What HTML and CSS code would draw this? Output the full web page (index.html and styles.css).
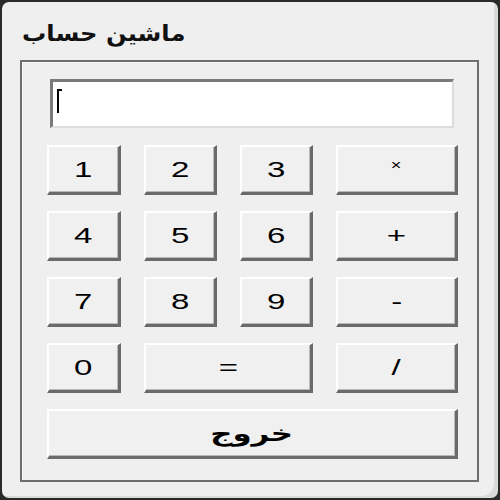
FILE: index.html
```html
<!DOCTYPE html>
<html lang="fa">
<head>
<meta charset="utf-8">
<link rel="stylesheet" href="styles.css">
</head>
<body>
<div class="window">
  <div class="title"><span class="title-text" dir="rtl">ماشین حساب</span></div>
  <div class="frame">
    <div class="display"><span class="caret"></span></div>
    <div class="keys">
      <button class="key"><span class="lbl">1</span></button>
      <button class="key"><span class="lbl">2</span></button>
      <button class="key"><span class="lbl">3</span></button>
      <button class="key"><span class="lbl small">×</span></button>
      <button class="key"><span class="lbl">4</span></button>
      <button class="key"><span class="lbl">5</span></button>
      <button class="key"><span class="lbl">6</span></button>
      <button class="key"><span class="lbl">+</span></button>
      <button class="key"><span class="lbl">7</span></button>
      <button class="key"><span class="lbl">8</span></button>
      <button class="key"><span class="lbl">9</span></button>
      <button class="key"><span class="lbl">-</span></button>
      <button class="key"><span class="lbl">0</span></button>
      <button class="key span2"><span class="lbl">=</span></button>
      <button class="key"><span class="lbl">/</span></button>
      <button class="key span4"><span class="lbl exit" dir="rtl">خروج</span></button>
    </div>
  </div>
</div>
</body>
</html>
```
FILE: styles.css
```css
html, body {
  margin: 0;
  padding: 0;
  background: #2b2b2b;
}
.window {
  box-sizing: border-box;
  width: 500px;
  height: 500px;
  background: #efefef;
  border: 2px solid #2a2a2a;
  border-radius: 9px;
  box-shadow: inset -10px -8px 0 -6px #dadada;
  padding: 18px 0 0 18px;
  font-family: "DejaVu Sans", "Liberation Sans", sans-serif;
}
.title {
  height: 40px;
  line-height: 28px;
}
.title-text {
  display: inline-block;
  font-size: 22px;
  font-weight: bold;
  color: #111;
  transform: scaleX(1.1);
  transform-origin: left center;
  margin-left: 2px;
}
.frame {
  box-sizing: border-box;
  width: 459px;
  height: 422px;
  border: 2px solid #6e6e6e;
  box-shadow: inset 1px 1px 0 #fafafa;
  padding: 17px 0 0 25px;
}
.display {
  box-sizing: border-box;
  width: 404px;
  height: 49px;
  margin-left: 3px;
  background: #fff;
  border-top: 3px solid #7a7a7a;
  border-left: 3px solid #7a7a7a;
  border-right: 2px solid #dcdcdc;
  border-bottom: 2px solid #dcdcdc;
  padding: 7px 0 0 4px;
}
.caret {
  display: block;
  width: 2px;
  height: 24px;
  background: #000;
  position: relative;
}
.caret::before {
  content: "";
  position: absolute;
  left: 2px;
  top: 0;
  width: 3px;
  height: 2px;
  background: #000;
}
.keys {
  display: grid;
  grid-template-columns: 74px 73px 73px 122px;
  grid-auto-rows: 50px;
  column-gap: 23px;
  row-gap: 16px;
  margin-top: 17px;
}
.key {
  margin: 0;
  padding: 0;
  box-sizing: border-box;
  background: #f0f0f0;
  border-top: 2px solid #ffffff;
  border-left: 2px solid #ffffff;
  border-right: 3px solid #6a6a6a;
  border-bottom: 3px solid #6a6a6a;
  box-shadow: inset -1px -1px 0 #b8b8b8;
  display: flex;
  align-items: center;
  justify-content: center;
  font-family: "Liberation Sans", sans-serif;
  color: #000;
  cursor: default;
}
.span2 { grid-column: span 2; }
.span4 { grid-column: span 4; }
.lbl {
  display: inline-block;
  font-size: 22px;
  line-height: 22px;
  transform: scaleX(1.5);
}
.lbl.small {
  font-size: 14px;
  transform: translateY(-5px) scaleX(1.3);
}
.lbl.exit {
  font-family: "DejaVu Sans", sans-serif;
  font-weight: bold;
  font-size: 22px;
  line-height: 26px;
  transform: scaleX(1.4);
}
```
